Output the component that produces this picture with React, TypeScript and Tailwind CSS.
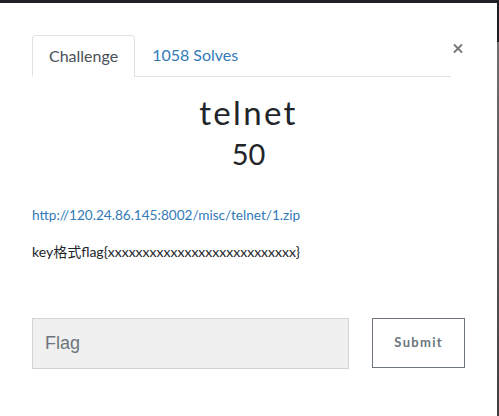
import { X } from "lucide-react";

const lato = { fontFamily: "Lato, 'Noto Sans CJK SC', sans-serif" };

export default function App() {
  return (
    <div className="flex h-[416px] w-[499px] flex-col overflow-hidden bg-[linear-gradient(to_bottom,#1c1e21_42px,#6e6e6e_42px,#3f3f3f)]">
      {/* navbar strip behind the modal */}
      <div className="h-[3px] shrink-0 bg-[#1f2124]" />

      {/* Modal */}
      <div
        className="mr-[2px] flex flex-1 flex-col bg-white px-[32px] pt-[32px]"
        style={lato}
      >
        {/* Tabs */}
        <div className="flex items-start">
          <div className="flex flex-1 border-b border-[#dee2e6]">
            <div className="-mb-px rounded-t-[4px] border border-[#dee2e6] border-b-white bg-white px-[16px] pb-[10px] pt-[9px] text-[16px] leading-[21px] text-[#495057]">
              Challenge
            </div>
            <div className="px-[17px] pb-[10px] pt-[9px] text-[16px] leading-[21px] text-[#337ab7]">
              1058 Solves
            </div>
          </div>
          <button className="ml-[0px] mt-[5px] flex h-[16px] w-[14px] items-center justify-center text-[#777777]">
            <X size={19} strokeWidth={3.2} />
          </button>
        </div>

        {/* Title */}
        <div className="mt-[15px] text-center">
          <h2 className="text-[33px] font-normal leading-[40px] tracking-[0.07em] text-[#212529]">
            telnet
          </h2>
          <h3 className="mt-[4px] text-[29px] leading-[36px] text-[#212529]">
            50
          </h3>
        </div>

        {/* Description */}
        <div className="mt-[33px] text-[13.6px] leading-[20px] text-[#212529]">
          <a className="text-[#337ab7]">
            http://120.24.86.145:8002/misc/telnet/1.zip
          </a>
          <p className="mt-[17px] text-[14px]">key格式flag{"{"}xxxxxxxxxxxxxxxxxxxxxxxxxxx{"}"}</p>
        </div>

        {/* Submit row */}
        <div className="mt-[56px] flex items-start gap-[23px]">
          <input
            placeholder="Flag"
            className="h-[51px] w-[318px] border border-[#ced4da] bg-[#f0f0f0] px-[12px] text-[18px] text-[#495057] placeholder:text-[#6c757d] outline-none"
            style={{ fontFamily: "'Liberation Sans', Arial, sans-serif" }}
          />
          <button className="h-[50px] w-[93px] border border-[#6c757d] bg-white text-[13px] font-bold tracking-[0.1em] text-[#6c757d]">
            Submit
          </button>
        </div>
      </div>
    </div>
  );
}
